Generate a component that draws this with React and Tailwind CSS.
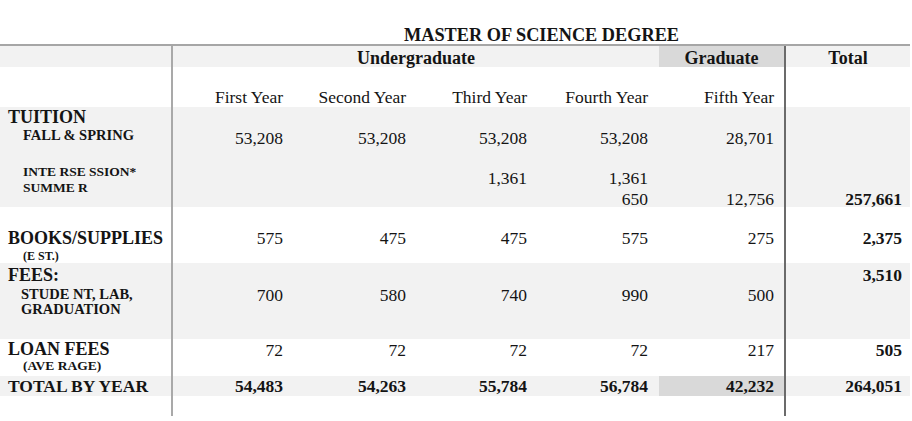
const LABEL = "w-[173px] shrink-0 border-r-2 border-[#a9a9a9]";
const COLS = [
  "w-[118px] shrink-0 pr-2 text-right",
  "w-[123px] shrink-0 pr-2 text-right",
  "w-[121px] shrink-0 pr-2 text-right",
  "w-[124px] shrink-0 pr-[11px] text-right",
  "w-[127px] shrink-0 pr-[10px] text-right border-r-2 border-[#6b6b6b]",
  "w-[124px] shrink-0 pr-2 text-right font-bold",
];

const NUM = "text-[17.5px] leading-[21px] h-[21px]";

function Row({ bg, h, label, cells, gradBg }) {
  return (
    <div className={`flex ${bg} ${h}`}>
      <div className={LABEL}>{label}</div>
      {cells.map((c, i) => (
        <div key={i} className={`${COLS[i]} ${i === 4 && gradBg ? gradBg : ""}`}>
          {c}
        </div>
      ))}
    </div>
  );
}

function Tuition({ a, b, c }) {
  return (
    <div className="pt-[21px]">
      <div className={NUM}>{a}</div>
      <div className={`${NUM} mt-[19px]`}>{b}</div>
      <div className={NUM}>{c}</div>
    </div>
  );
}

const Single = ({ v, pt }) => <div className={`${NUM} ${pt}`}>{v}</div>;

export default function App() {
  const tuition = [
    ["53,208", "", ""],
    ["53,208", "", ""],
    ["53,208", "1,361", ""],
    ["53,208", "1,361", "650"],
    ["28,701", "", "12,756"],
    ["", "", "257,661"],
  ];
  const books = ["575", "475", "475", "575", "275", "2,375"];
  const fees = ["700", "580", "740", "990", "500"];
  const loan = ["72", "72", "72", "72", "217", "505"];
  const totals = ["54,483", "54,263", "55,784", "56,784", "42,232", "264,051"];

  return (
    <div className="w-[912px] h-[421px] bg-white text-[#141414] font-['Liberation_Serif','Times_New_Roman',serif]">
      <div className="w-[910px]">
        {/* title */}
        <div className="h-[44px] flex items-end justify-center pl-[173px]">
          <span className="text-[18.3px] leading-[18px] font-bold">MASTER OF SCIENCE DEGREE</span>
        </div>

        {/* group header */}
        <div className="flex h-[23px] border-t-2 border-[#a6a6a6] bg-[#f2f2f2] text-[18px] font-bold leading-[19px]">
          <div className={LABEL}></div>
          <div className="w-[486px] shrink-0 text-center pt-[3px]">Undergraduate</div>
          <div className="w-[127px] shrink-0 text-center pt-[3px] bg-[#d9d9d9] border-r-2 border-[#6b6b6b]">Graduate</div>
          <div className="w-[124px] shrink-0 text-center pt-[3px]">Total</div>
        </div>

        {/* year header */}
        <Row
          bg="bg-white"
          h="h-[40px]"
          label={null}
          cells={["First Year", "Second Year", "Third Year", "Fourth Year", "Fifth Year", ""].map((t, i) => (
            <div key={i} className="text-[17.5px] leading-[20px] h-full flex items-end justify-end">{t}</div>
          ))}
        />

        {/* tuition */}
        <Row
          bg="bg-[#f2f2f2]"
          h="h-[100px]"
          label={
            <div className="font-bold">
              <div className="pl-2 text-[18px] leading-[20px]">TUITION</div>
              <div className="pl-[23px] text-[14.5px] leading-[16px]">FALL &amp; SPRING</div>
              <div className="pl-[23px] text-[13.5px] leading-[16px] mt-[21px]">INTE RSE SSION*</div>
              <div className="pl-[23px] text-[13.5px] leading-[16px]">SUMME R</div>
            </div>
          }
          cells={tuition.map((t, i) => <Tuition key={i} a={t[0]} b={t[1]} c={t[2]} />)}
        />

        {/* books */}
        <Row
          bg="bg-white"
          h="h-[56px]"
          label={
            <div className="font-bold pt-[21px]">
              <div className="pl-2 text-[18px] leading-[20px]">BOOKS/SUPPLIES</div>
              <div className="pl-[23px] text-[12px] leading-[14px] mt-px">(E ST.)</div>
            </div>
          }
          cells={books.map((v, i) => <Single key={i} v={v} pt="mt-[21px]" />)}
        />

        {/* fees */}
        <Row
          bg="bg-[#f2f2f2]"
          h="h-[76px]"
          label={
            <div className="font-bold pt-[2px]">
              <div className="pl-2 text-[18px] leading-[20px]">FEES:</div>
              <div className="pl-[21px] text-[14.5px] leading-[15px] mt-[2px]">STUDE NT, LAB,</div>
              <div className="pl-[21px] text-[14.5px] leading-[15px]">GRADUATION</div>
            </div>
          }
          cells={[
            ...fees.map((v, i) => <Single key={i} v={v} pt="mt-[22px]" />),
            <Single key="t" v="3,510" pt="mt-[2px]" />,
          ]}
        />

        {/* loan fees */}
        <Row
          bg="bg-white"
          h="h-[37px]"
          label={
            <div className="font-bold">
              <div className="pl-2 text-[18px] leading-[20px]">LOAN FEES</div>
              <div className="pl-[23px] text-[13.5px] leading-[14px]">(AVE RAGE)</div>
            </div>
          }
          cells={loan.map((v, i) => <Single key={i} v={v} pt="mt-px" />)}
        />

        {/* total by year */}
        <Row
          bg="bg-[#f2f2f2]"
          h="h-[20px]"
          gradBg="bg-[#d9d9d9]"
          label={<div className="pl-2 text-[17.5px] leading-[20px] font-bold">TOTAL BY YEAR</div>}
          cells={totals.map((v, i) => (
            <div key={i} className="text-[17.5px] leading-[20px] font-bold">{v}</div>
          ))}
        />

        {/* trailing rule space */}
        <Row bg="bg-white" h="h-[20px]" label={null} cells={["", "", "", "", "", ""]} />
      </div>
    </div>
  );
}
